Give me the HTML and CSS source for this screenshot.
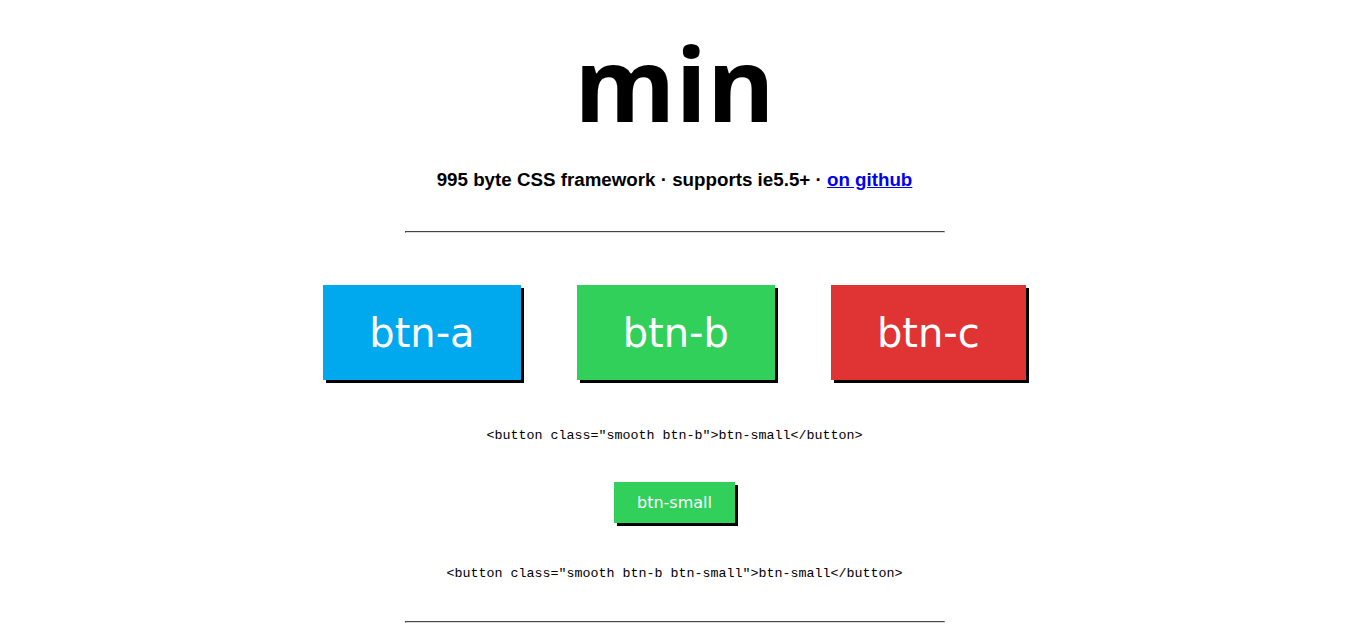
FILE: index.html
```html
<!DOCTYPE html>
<html>
<head>
<meta charset="utf-8">
<link rel="stylesheet" href="styles.css">
</head>
<body>
<div class="page">
  <h1 class="title">min</h1>
  <p class="subtitle">995 byte CSS framework · supports ie5.5+ · <a href="#">on github</a></p>
  <hr class="rule">
  <div class="btn-row">
    <button class="btn btn-a">btn-a</button>
    <button class="btn btn-b">btn-b</button>
    <button class="btn btn-c">btn-c</button>
  </div>
  <pre class="code">&lt;button class="smooth btn-b"&gt;btn-small&lt;/button&gt;</pre>
  <div class="small-row"><button class="btn btn-b btn-small">btn-small</button></div>
  <pre class="code code2">&lt;button class="smooth btn-b btn-small"&gt;btn-small&lt;/button&gt;</pre>
  <hr class="rule rule2">
</div>
</body>
</html>
```
FILE: styles.css
```css
html, body { margin: 0; padding: 0; background: #fff; }
.page { text-align: center; font-family: "Liberation Sans", Arial, sans-serif; }
.title {
  margin: 0; padding-top: 20px;
  font-family: "Open Sans", sans-serif; font-weight: bold;
  font-size: 103px; line-height: 124px; color: #000;
}
.subtitle { margin: 25px 0 0; font-size: 18.75px; font-weight: bold; line-height: 22px; }
.subtitle a { color: #0000ee; }
.rule { width: 538px; margin: 40px auto 0; border: 1px inset #eee; border-color: #999 #ccc #ddd #999; height: 0; }
.btn-row { display: flex; justify-content: center; gap: 56px; margin-top: 52px; }
.btn {
  font-family: "DejaVu Sans", sans-serif; font-size: 40px; color: #fff;
  border: 0; padding: 0 46px; height: 95px; box-shadow: 3px 3px 0 #000; margin: 0;
}
.btn-a { background: #00a9ee; }
.btn-b { background: #31d05a; }
.btn-c { background: #e03434; }
.code { font-family: "Liberation Mono", "Courier New", monospace; font-size: 13.33px; margin: 48px 0 0; line-height: 16px; }
.small-row { margin-top: 38px; }
.btn-small { font-size: 16px; height: 41px; padding: 0 23px; }
.code2 { margin-top: 43px; }
.rule2 { margin-top: 39px; }
```
